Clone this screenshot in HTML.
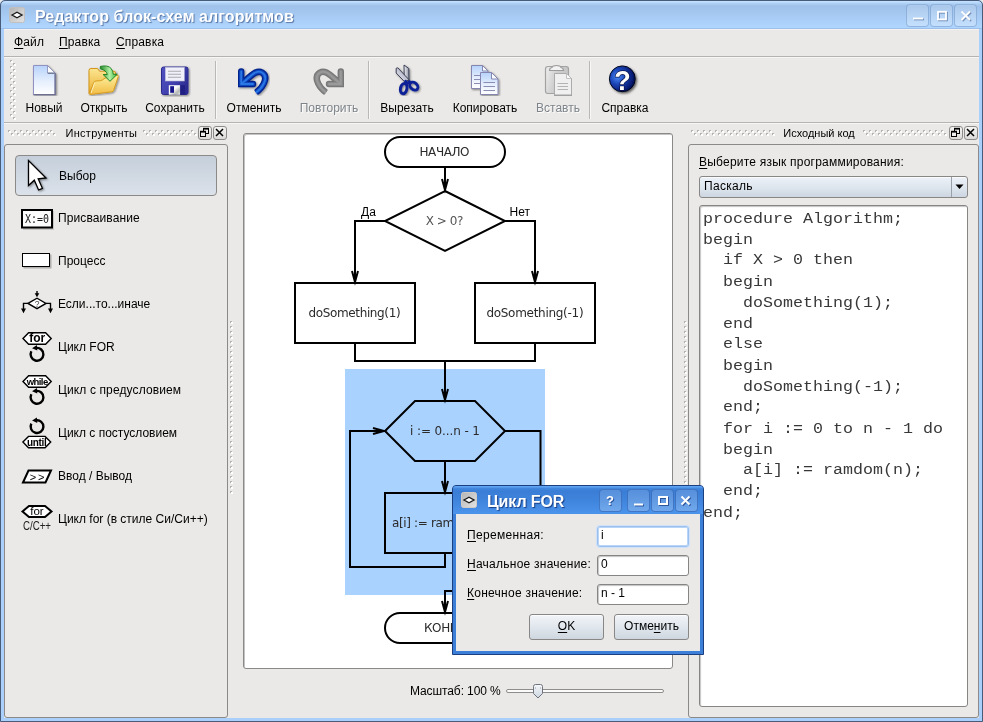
<!DOCTYPE html>
<html lang="ru">
<head>
<meta charset="utf-8">
<title>Редактор блок-схем алгоритмов</title>
<style>
html,body{margin:0;padding:0;}
body{width:983px;height:722px;overflow:hidden;position:relative;background:#eae9e7;
 font-family:"Liberation Sans",sans-serif;font-size:12px;color:#000;}
.a{position:absolute;}
.t{position:absolute;white-space:pre;line-height:14px;height:14px;}
u{text-decoration:underline;text-underline-offset:2px;text-decoration-thickness:1px;}
/* window frame */
#frame{left:0;top:0;width:983px;height:722px;box-sizing:border-box;background:#aacffa;border-radius:5px 5px 0 0;}
#frame-dark{left:0;top:0;width:983px;height:722px;box-sizing:border-box;border:1px solid #485c7a;border-radius:5px 5px 0 0;}
#titlebar{left:1px;top:1px;width:981px;height:28px;border-radius:4px 4px 0 0;
 background:linear-gradient(#c2e0ff 0,#c0deff 1px,#aed0f4 2.500px,#9fc1e9 5px,#afd5fe 26px,#afd5fe 27px,#9dc0ea 27px,#9dc0ea 28px);}
#client{left:4px;top:29px;width:975px;height:689px;background:#eae9e7;}
#title{left:35px;top:7px;font:bold 16px "Liberation Sans",sans-serif;color:#fff;line-height:20px;height:20px;
 text-shadow:1px 1px 1px rgba(60,90,140,.75);letter-spacing:0.08px;}
.wbtn{position:absolute;width:23px;height:23px;box-sizing:border-box;border:1px solid rgba(110,150,200,.55);border-radius:4px;
 background:linear-gradient(rgba(255,255,255,.12),rgba(255,255,255,.28));}
.hline{position:absolute;height:1px;}
.vsep{position:absolute;width:1px;top:61px;height:58px;background:#b9b8b6;box-shadow:1px 0 0 #f7f7f6;}
.tbl{position:absolute;top:101px;line-height:14px;height:14px;white-space:pre;text-align:center;}
.dis{color:#7e848a;text-shadow:1px 1px 0 #fdfdfd;}
.dbtn{position:absolute;width:14px;height:14px;box-sizing:border-box;border:1px solid #8d8c8a;border-radius:3px;background:linear-gradient(#f4f4f3,#dcdbd9);}
.panel{position:absolute;box-sizing:border-box;border:1px solid #8b8a88;border-radius:3px;}
.edit{position:absolute;box-sizing:border-box;border:1px solid #868584;border-radius:3px;background:#fff;box-shadow:inset 1px 1px 1px #c4c4c4;}
.btn{position:absolute;box-sizing:border-box;border:1px solid #888786;border-radius:3px;background:linear-gradient(#f2f5f9,#dfe5ec 55%,#ced6df);box-shadow:inset 0 1px 0 rgba(255,255,255,.7);}
#code{left:703px;top:209px;font:16.667px/24.706px "Liberation Mono",monospace;white-space:pre;color:#383838;transform:scaleY(0.85);transform-origin:0 0;}
.fc{font-family:"DejaVu Sans","Liberation Sans",sans-serif;font-size:12px;fill:#2a2a2a;letter-spacing:-0.35px;}
.wbtn.d{border-color:rgba(40,90,170,.6);background:linear-gradient(rgba(255,255,255,.15),rgba(255,255,255,.22));}
</style>
</head>
<body>
<div id="root" style="position:absolute;left:0;top:0;width:983px;height:722px;will-change:transform">
<!-- ===== main window frame ===== -->
<div class="a" id="frame"></div>
<div class="a" id="titlebar"></div>
<div class="a" id="client"></div>
<div class="hline" style="left:4px;top:29px;width:975px;background:#f4f3f1"></div>
<div class="a" id="frame-dark"></div>
<div class="t" id="title">Редактор блок-схем алгоритмов</div>
<svg class="a" style="left:9px;top:7px" width="16" height="16" viewBox="0 0 16 16"><defs><linearGradient id="gi" x1="0" y1="0" x2="1" y2="1"><stop offset="0" stop-color="#b4b4b4"/><stop offset="1" stop-color="#e4e4e4"/></linearGradient></defs><rect x="0.5" y="0.5" width="15" height="15" rx="2" fill="url(#gi)" stroke="#c2c0be"/><path d="M3 8 L8 5.3 L13 8 L8 10.7 Z" fill="#fff" stroke="#1a1a1a" stroke-width="1.3"/></svg>
<div class="wbtn" style="left:906px;top:4px"></div>
<div class="wbtn" style="left:930px;top:4px"></div>
<div class="wbtn" style="left:954px;top:4px"></div>
<svg class="a" style="left:906px;top:4px" width="72" height="23" viewBox="0 0 72 23">
<g stroke="rgba(60,90,140,.55)" stroke-width="1.800" fill="none" transform="translate(1,1)"><path d="M7 14.500h10"/><rect x="32" y="7.800" width="8" height="7.600"/><path d="M55.500 7.500l8.500 8.500M64 7.500l-8.500 8.500"/></g>
<g stroke="#fff" stroke-width="1.800" fill="none"><path d="M7 14.500h10"/><rect x="32" y="7.800" width="8" height="7.600"/><path d="M55.500 7.500l8.500 8.500M64 7.500l-8.500 8.500"/></g></svg>
<div class="hline" style="left:4px;top:56px;width:975px;background:#b4b3b1"></div>
<div class="hline" style="left:4px;top:57px;width:975px;background:#f6f6f5"></div>
<div class="t" style="left:14px;top:35px;letter-spacing:0.15px"><u>Ф</u>айл</div>
<div class="t" style="left:59px;top:35px;letter-spacing:0.15px"><u>П</u>равка</div>
<div class="t" style="left:116px;top:35px;letter-spacing:0.15px"><u>С</u>правка</div>
<svg class="a" width="0" height="0" style="left:0;top:0"><defs>
<linearGradient id="gpage" x1="0" y1="0" x2="0" y2="1"><stop offset="0" stop-color="#b6d2fa"/><stop offset="0.55" stop-color="#e6effd"/><stop offset="1" stop-color="#ffffff"/></linearGradient>
<linearGradient id="gfold" x1="0" y1="0" x2="0" y2="1"><stop offset="0" stop-color="#fdf0a0"/><stop offset="1" stop-color="#f2bc44"/></linearGradient>
<linearGradient id="gfoldb" x1="0" y1="0" x2="0" y2="1"><stop offset="0" stop-color="#fbe692"/><stop offset="1" stop-color="#eaae30"/></linearGradient>
<linearGradient id="ggreen" x1="0" y1="0" x2="1" y2="0"><stop offset="0" stop-color="#1f8a26"/><stop offset="0.55" stop-color="#b4f0a4"/><stop offset="1" stop-color="#36b83a"/></linearGradient>
<linearGradient id="gflop" x1="0" y1="0" x2="1" y2="0.600"><stop offset="0" stop-color="#5252c2"/><stop offset="0.6" stop-color="#4040ae"/><stop offset="1" stop-color="#2c2c92"/></linearGradient>
<linearGradient id="gundo" x1="0" y1="0" x2="0" y2="1"><stop offset="0" stop-color="#2a74e0"/><stop offset="1" stop-color="#0a3aa8"/></linearGradient>
<linearGradient id="gredo" x1="0" y1="0" x2="0" y2="1"><stop offset="0" stop-color="#a4a4a4"/><stop offset="1" stop-color="#7c7c7c"/></linearGradient>
<radialGradient id="ghelp" cx="0.32" cy="0.42" r="0.72"><stop offset="0" stop-color="#4f8cf6"/><stop offset="0.4" stop-color="#1c46b8"/><stop offset="0.8" stop-color="#071c74"/><stop offset="1" stop-color="#030a40"/></radialGradient>
<linearGradient id="gclip" x1="0" y1="0" x2="1" y2="0.300"><stop offset="0" stop-color="#efefef"/><stop offset="0.5" stop-color="#d0d0d0"/><stop offset="1" stop-color="#c4c4c4"/></linearGradient>
<linearGradient id="gblade" x1="0" y1="0" x2="1" y2="0"><stop offset="0" stop-color="#f2f2f6"/><stop offset="1" stop-color="#8e92a4"/></linearGradient>
<linearGradient id="gblade2" x1="0" y1="1" x2="1" y2="0"><stop offset="0" stop-color="#f6f6fa"/><stop offset="1" stop-color="#8e92ac"/></linearGradient>
<filter id="sh2" x="-20%" y="-20%" width="160%" height="160%"><feDropShadow dx="1.500" dy="1.500" stdDeviation="1.300" flood-color="#000" flood-opacity="0.6"/></filter>
<linearGradient id="gmetal" x1="0" y1="0" x2="1" y2="1"><stop offset="0" stop-color="#f4f4f4"/><stop offset="0.45" stop-color="#fafafa"/><stop offset="0.75" stop-color="#b4b8b4"/><stop offset="1" stop-color="#e8e8e8"/></linearGradient>
<filter id="sh" x="-20%" y="-20%" width="150%" height="150%"><feDropShadow dx="1" dy="1" stdDeviation="0.8" flood-color="#000" flood-opacity="0.45"/></filter>
<pattern id="pd" x="0" y="0" width="6" height="6" patternUnits="userSpaceOnUse"><rect x="0" y="0" width="2" height="2" fill="#b4b3b1"/><rect x="1" y="1" width="2" height="2" fill="#fff"/><rect x="3" y="3" width="2" height="2" fill="#b4b3b1"/><rect x="4" y="4" width="2" height="2" fill="#fff"/></pattern>
<pattern id="ps" x="0" y="0" width="5" height="5" patternUnits="userSpaceOnUse"><rect x="0" y="0" width="2" height="2" fill="#b4b3b1"/><rect x="1" y="1" width="2" height="2" fill="#fff"/></pattern>
</defs></svg>
<div class="hline" style="left:4px;top:122px;width:975px;background:#b4b3b1"></div>
<div class="hline" style="left:4px;top:123px;width:975px;background:#f6f6f5"></div>
<svg class="a" style="left:10px;top:60px" width="6" height="60"><rect width="6" height="60" fill="url(#pd)"/></svg>
<div class="vsep" style="left:215px"></div><div class="vsep" style="left:368px"></div><div class="vsep" style="left:589px"></div>
<!-- new -->
<svg class="a" style="left:28px;top:64px" width="32" height="32" viewBox="0 0 32 32"><g filter="url(#sh)"><path d="M5.500 1.500H19.500L27 9V30.500H5.500Z" fill="url(#gpage)" stroke="#9092c4" stroke-width="1"/><path d="M19.500 1.500V9H27Z" fill="#fbfdff" stroke="#8486b4" stroke-width="0.800" stroke-linejoin="round"/><path d="M19.800 9.300H26.500" stroke="#6c7890" stroke-width="1.200"/><path d="M27.200 9V30.700H5.500" fill="none" stroke="#6e7092" stroke-width="1.300"/></g></svg>
<!-- open -->
<svg class="a" style="left:88px;top:64px" width="32" height="32" viewBox="0 0 32 32"><g filter="url(#sh)"><path d="M1 29.500V6.300Q1 4.500 3 4.500H9.500L11.500 7.200H26Q27.500 7.200 27.500 9V14L6 19Z" fill="url(#gfoldb)" stroke="#d4961a" stroke-width="1"/><path d="M1.700 30.500L5.700 18.600Q6.200 17.200 8 17L12.500 16.700Q14.500 16.300 16 14.800Q17 14 18.500 13.700L28.800 11.200Q30.800 10.800 30.200 12.700L25.600 26.400Q25.200 27.600 23.600 27.800Z" fill="url(#gfold)" stroke="#d99c1c" stroke-width="1" stroke-linejoin="round"/><path d="M3 29L6.600 18.800" stroke="#fff8d8" stroke-width="0.900" fill="none" opacity=".9"/></g><path d="M12.300 2.400Q20 0.800 23.200 4.500Q25.200 7.300 25.300 10.300L29.300 10.200L22 17.300L15.200 10.600L19.300 10.500Q18.600 6.400 12.300 4.800Z" fill="url(#ggreen)" stroke="#15781c" stroke-width="0.900" stroke-linejoin="round"/></svg>
<!-- save -->
<svg class="a" style="left:159px;top:65px" width="32" height="32" viewBox="0 0 32 32"><g filter="url(#sh)"><path d="M2.500 4Q2.500 2 4.500 2H27Q29 2 29 4V27.500Q29 29.500 27 29.500H4.500Q2.500 29.500 2.500 27.500Z" fill="url(#gflop)" stroke="#2c2c8c" stroke-width="1"/></g><rect x="6.300" y="2.300" width="19" height="13.700" fill="#f0f0fb" stroke="#b8b8d8" stroke-width="0.600"/><path d="M9 6.200H22M9 9.200H22M9 12.200H22" stroke="#a9a9ac" stroke-width="1.100"/><rect x="21" y="20.200" width="5" height="9.300" fill="#1f1f84"/><rect x="9.800" y="20.200" width="11.300" height="9.600" fill="url(#gmetal)"/><rect x="11.200" y="21.200" width="3.800" height="6.600" fill="#16168a"/></svg>
<!-- undo -->
<svg class="a" style="left:238px;top:64px" width="32" height="32" viewBox="0 0 32 32"><g filter="url(#sh)"><path d="M3.200 20L13.500 11.200Q19.500 6 24 8.500Q29.500 12 25.800 19.500Q23.500 24.500 18 28.500" fill="none" stroke="#04228a" stroke-width="6.400" stroke-linecap="butt"/><path d="M3.200 7.500V20H15" fill="none" stroke="#04228a" stroke-width="6.400" stroke-linecap="round" stroke-linejoin="miter"/><path d="M3.200 20L13.500 11.200Q19.500 6 24 8.500Q29.500 12 25.800 19.500Q23.500 24.500 18 28.500" fill="none" stroke="#0c47c0" stroke-width="4" stroke-linecap="butt"/><path d="M3.200 7.500V20H15" fill="none" stroke="#0c47c0" stroke-width="4" stroke-linecap="round" stroke-linejoin="miter"/><path d="M3.200 20L13.500 11.200Q19.500 6 24 8.500Q29.500 12 25.800 19.500Q23.500 24.500 18 28.500" fill="none" stroke="#2f7fea" stroke-width="1.800" stroke-linecap="butt" opacity=".85"/><path d="M3.200 7.500V20H15" fill="none" stroke="#2f7fea" stroke-width="1.800" stroke-linecap="round" stroke-linejoin="miter" opacity=".85"/></g></svg>
<!-- redo -->
<svg class="a" style="left:311.5px;top:64px" width="32" height="32" viewBox="0 0 32 32"><g transform="translate(32,0) scale(-1,1)"><path d="M3.200 20L13.500 11.200Q19.500 6 24 8.500Q29.500 12 25.800 19.500Q23.500 24.500 18 28.500" fill="none" stroke="#777777" stroke-width="6.400" stroke-linecap="butt"/><path d="M3.200 7.500V20H15" fill="none" stroke="#777777" stroke-width="6.400" stroke-linecap="round" stroke-linejoin="miter"/><path d="M3.200 20L13.500 11.200Q19.500 6 24 8.500Q29.500 12 25.800 19.500Q23.500 24.500 18 28.500" fill="none" stroke="#8a8a8a" stroke-width="4" stroke-linecap="butt"/><path d="M3.200 7.500V20H15" fill="none" stroke="#8a8a8a" stroke-width="4" stroke-linecap="round" stroke-linejoin="miter"/><path d="M3.200 20L13.500 11.200Q19.500 6 24 8.500Q29.500 12 25.800 19.500Q23.500 24.500 18 28.500" fill="none" stroke="#9c9c9c" stroke-width="1.800" stroke-linecap="butt" opacity=".85"/><path d="M3.200 7.500V20H15" fill="none" stroke="#9c9c9c" stroke-width="1.800" stroke-linecap="round" stroke-linejoin="miter" opacity=".85"/></g></svg>
<!-- cut -->
<svg class="a" style="left:391px;top:64px" width="32" height="32" viewBox="0 0 32 32"><g filter="url(#sh)">
<path d="M13 1L17.800 4.500L18 16.500L13.300 14Z" fill="url(#gblade)" stroke="#2c3248" stroke-width="0.900" stroke-linejoin="round"/>
<path d="M5.200 4.300L6.800 3.800L17.800 15.500L14 18.200L5.200 9Z" fill="url(#gblade2)" stroke="#2c3248" stroke-width="0.900" stroke-linejoin="round"/>
<ellipse cx="12.700" cy="24.600" rx="3.200" ry="5.100" fill="none" stroke="#0c2096" stroke-width="3" transform="rotate(12 12.700 24.600)"/>
<ellipse cx="22.800" cy="22.100" rx="4.700" ry="3.300" fill="none" stroke="#0c2096" stroke-width="2.900" transform="rotate(42 22.800 22.100)"/>
<path d="M14.500 17L16 19.500L18.500 17.500" fill="none" stroke="#0c2096" stroke-width="2.600" stroke-linecap="round"/>
</g></svg>
<!-- copy -->
<svg class="a" style="left:469px;top:64px" width="32" height="32" viewBox="0 0 32 32"><g filter="url(#sh)"><path d="M2.500 1.500H13.500L19 7V24.500H2.500Z" fill="url(#gpage)" stroke="#8486b0" stroke-width="1"/><path d="M13.500 1.500V7H19Z" fill="#f8fbff" stroke="#8486b0" stroke-width="1" stroke-linejoin="round"/><path d="M5 11.500H11M5 15.500H11M5 19.500H11" stroke="#8a8cb6" stroke-width="1"/><path d="M11.500 8.500H22.500L29 15V30.500H11.500Z" fill="url(#gpage)" stroke="#8486b0" stroke-width="1"/><path d="M22.500 8.500V15H29Z" fill="#f8fbff" stroke="#8486b0" stroke-width="1" stroke-linejoin="round"/><path d="M14.500 18.500H26M14.500 22.500H26M14.500 26.500H26" stroke="#8a8cb6" stroke-width="1"/></g></svg>
<!-- paste -->
<svg class="a" style="left:542px;top:64px" width="32" height="32" viewBox="0 0 32 32"><path d="M3.500 5Q3.500 2.500 6 2.500H24Q26.500 2.500 26.500 5V27Q26.500 29.500 24 29.500H6Q3.500 29.500 3.500 27Z" fill="url(#gclip)" stroke="#a2a2a2" stroke-width="1.200"/><path d="M7.500 6.500Q7.500 4 10 3.500Q10.500 1.500 14.500 1.500Q18.500 1.500 19 3.500Q21.500 4 21.500 6.500Z" fill="#f2f2f2" stroke="#9c9c9c" stroke-width="1.200"/><path d="M12.500 9.500H24.500L29.500 14.500V31H12.500Z" fill="#f0f0f0" stroke="#ababab" stroke-width="1"/><path d="M24.500 9.500V14.500H29.500Z" fill="#fafafa" stroke="#b4b4b4" stroke-width="0.800"/><path d="M12 31.500H30" stroke="#a0a0a0" stroke-width="1.200"/><path d="M15.500 19.500H26M15.500 22.500H26M15.500 25.500H26" stroke="#b4b4b4" stroke-width="1"/></svg>
<!-- help -->
<svg class="a" style="left:608px;top:64px" width="34" height="34" viewBox="0 0 34 34"><g filter="url(#sh2)"><circle cx="14.300" cy="14.800" r="12.900" fill="url(#ghelp)" stroke="#03061c" stroke-width="1"/></g><text x="14.600" y="25.500" text-anchor="middle" font-family="Liberation Sans,sans-serif" font-weight="bold" font-size="27" fill="#fff" stroke="#0a1048" stroke-width="1.400" paint-order="stroke" stroke-linejoin="round">?</text></svg>
<div class="tbl" style="left:14px;width:60px">Новый</div>
<div class="tbl" style="left:74px;width:60px">Открыть</div>
<div class="tbl" style="left:140px;width:70px">Сохранить</div>
<div class="tbl" style="left:219px;width:70px">Отменить</div>
<div class="tbl dis" style="left:294px;width:70px">Повторить</div>
<div class="tbl" style="left:372px;width:70px">Вырезать</div>
<div class="tbl" style="left:445px;width:80px">Копировать</div>
<div class="tbl dis" style="left:523px;width:70px">Вставть</div>
<div class="tbl" style="left:590px;width:70px">Справка</div>


<svg class="a" style="left:8px;top:130px" width="48" height="6"><rect width="48" height="6" fill="url(#pd)"/></svg>
<svg class="a" style="left:143px;top:130px" width="54" height="6"><rect width="54" height="6" fill="url(#pd)"/></svg>
<div class="t" style="left:65.500px;top:126px;font-size:11px;letter-spacing:0.29px">Инструменты</div>
<div class="dbtn" style="left:198px;top:126px"><svg width="11" height="11" viewBox="0 0 11 11" style="position:absolute;left:0;top:0"><rect x="4.500" y="2" width="5" height="4.500" fill="none" stroke="#000" stroke-width="1"/><path d="M4 1.500H10" stroke="#000" stroke-width="1.400"/><rect x="1.500" y="5" width="5" height="4.500" fill="#eee" stroke="#000" stroke-width="1"/><path d="M1 4.500H7" stroke="#000" stroke-width="1.400"/></svg></div>
<div class="dbtn" style="left:213px;top:126px"><svg width="11" height="11" viewBox="0 0 11 11" style="position:absolute;left:0;top:0"><path d="M2 2L9 9M9 2L2 9" stroke="#000" stroke-width="1.500"/></svg></div>
<div class="panel" style="left:4px;top:144px;width:224px;height:574px;border-left-color:#8b8a88"></div>
<div class="a" style="left:15px;top:155px;width:202px;height:41px;box-sizing:border-box;border:1px solid #8c8a88;border-radius:4px;background:linear-gradient(#c5cfdb,#d0d8e2 50%,#dbe2ea)"></div>
<div class="t" style="left:59px;top:169px">Выбор</div>
<div class="t" style="left:58px;top:211px;letter-spacing:0.1px">Присваивание</div>
<div class="t" style="left:58px;top:254px">Процесс</div>
<div class="t" style="left:58px;top:297px">Если...то...иначе</div>
<div class="t" style="left:58px;top:340px">Цикл FOR</div>
<div class="t" style="left:58px;top:383px;letter-spacing:0.12px">Цикл с предусловием</div>
<div class="t" style="left:58px;top:426px">Цикл с постусловием</div>
<div class="t" style="left:58px;top:469px">Ввод / Вывод</div>
<div class="t" style="left:58px;top:512px">Цикл for (в стиле Си/Си++)</div>
<svg class="a" style="left:0;top:150px" width="70" height="400" viewBox="0 150 70 400">
<!-- cursor -->
<g filter="url(#sh)"><path d="M28.500 160.500V185.500L34.300 180.200L38.600 190L42.400 188.300L38.200 178.800L46 178Z" fill="#fff" stroke="#000" stroke-width="1.300" stroke-linejoin="miter"/></g>
<!-- assign -->
<rect x="23" y="211" width="31" height="19" fill="#8a8a8a" opacity=".35"/>
<rect x="22" y="210" width="30" height="17.500" fill="#fcfcfc" stroke="#000" stroke-width="2"/>
<text x="25" y="222.800" textLength="24" lengthAdjust="spacingAndGlyphs" font-family="DejaVu Sans Mono,Liberation Mono,monospace" font-size="12" fill="#1a1a1a">X:=0</text>
<!-- process -->
<rect x="23.500" y="254.500" width="28" height="14" fill="#8a8a8a" opacity=".6"/>
<rect x="22.500" y="253.500" width="27" height="13" fill="#fff" stroke="#000" stroke-width="1"/>
<!-- if -->
<path d="M37 291V295" stroke="#000" stroke-width="1.400"/><path d="M34.700 293.300H39.300L37 297.300Z" fill="#000"/>
<path d="M28 303.400L37 298.200L46 303.400L37 308.600Z" fill="#fff" stroke="#000" stroke-width="1.400"/>
<path d="M28 303.400H23.500V309M46 303.400H50.500V309" fill="none" stroke="#000" stroke-width="1.400"/>
<path d="M21 308.500H26L23.500 313.200ZM48 308.500H53L50.500 313.200Z" fill="#000"/>
<text x="37" y="307" text-anchor="middle" font-family="Liberation Sans,sans-serif" font-size="8.500" fill="#444">?</text>
<!-- for -->
<path d="M23.00 338.50L28.60 332.80H45.60L51.20 338.50L45.60 344.20H28.60Z" fill="#fff" stroke="#000" stroke-width="1.4" stroke-linejoin="miter"/>
<text x="37.200" y="341.900" text-anchor="middle" font-family="Liberation Sans,sans-serif" font-weight="bold" font-size="12" fill="#000">for</text>
<path d="M35.89 348.00A6.4 6.4 0 1 1 31.35 351.30" fill="none" stroke="#000" stroke-width="2.4"/><path d="M36.89 345.10L32.09 348.30L37.29 350.60Z" fill="#000"/>
<!-- while -->
<path d="M23.00 381.50L28.60 375.80H45.60L51.20 381.50L45.60 387.20H28.60Z" fill="#fff" stroke="#000" stroke-width="1.4" stroke-linejoin="miter"/>
<text x="37.200" y="384.700" text-anchor="middle" font-family="Liberation Sans,sans-serif" font-weight="bold" font-size="9.500" letter-spacing="-0.600" fill="#000">while</text>
<path d="M35.89 391.00A6.4 6.4 0 1 1 31.35 394.30" fill="none" stroke="#000" stroke-width="2.4"/><path d="M36.89 388.10L32.09 391.30L37.29 393.60Z" fill="#000"/>
<!-- until -->
<path d="M35.89 420.30A6.4 6.4 0 1 1 31.35 423.60" fill="none" stroke="#000" stroke-width="2.4"/><path d="M36.89 417.40L32.09 420.60L37.29 422.90Z" fill="#000"/>
<path d="M22.90 442.10L28.50 436.40H45.10L50.70 442.10L45.10 447.80H28.50Z" fill="#fff" stroke="#000" stroke-width="1.4" stroke-linejoin="miter"/>
<text x="36.700" y="445.600" text-anchor="middle" font-family="Liberation Sans,sans-serif" font-weight="bold" font-size="10" letter-spacing="-0.300" fill="#000">until</text>
<!-- io -->
<path d="M23 482.500L28.500 470.500H51L45.500 482.500Z" fill="#fff" stroke="#000" stroke-width="2"/>
<text x="38" y="480.800" text-anchor="middle" font-family="Liberation Sans,sans-serif" font-size="11" letter-spacing="1.800" fill="#000">&gt;&gt;</text>
<!-- for c -->
<path d="M22.50 511.40L29.00 505.90H45.00L51.50 511.40L45.00 516.90H29.00Z" fill="#fff" stroke="#000" stroke-width="2" stroke-linejoin="miter"/>
<text x="37" y="515" text-anchor="middle" font-family="Liberation Sans,sans-serif" font-size="11.500" fill="#000">for</text>
<text x="37" y="530" text-anchor="middle" font-family="Liberation Sans,sans-serif" font-size="13.500" fill="#222" transform="translate(37 0) scale(0.72 1) translate(-37 0)">C/C++</text>
</svg>


<div class="a" style="left:243px;top:133px;width:430px;height:536px;box-sizing:border-box;border:1px solid #8a8988;border-radius:3px;background:#fff;box-shadow:inset 1px 1px 0 #c4c4c4"></div>
<svg class="a" style="left:244px;top:134px" width="428" height="534" viewBox="244 134 428 534">
<rect x="345" y="369" width="200" height="226" fill="#aad2ff"/>
<g fill="none" stroke="#000" stroke-width="2">
<rect x="385" y="137" width="120" height="30" rx="15" ry="15" fill="#fff"/>
<path d="M445 167V190"/>
<path d="M445 191L505 221L445 251L385 221Z" fill="#fff"/>
<path d="M385 221H355V281M505 221H535V281"/>
<rect x="295" y="283" width="120" height="60" fill="#fff"/>
<rect x="475" y="283" width="120" height="60" fill="#fff"/>
<path d="M355 343V361H535V343M445 361V400"/>
<path d="M385 431L415 401H475L505 431L475 461H415Z"/>
<path d="M445 461V491"/>
<rect x="385" y="493" width="120" height="60"/>
<path d="M445 553V567H350V431H384"/>
<path d="M505 431H540.500V591H445V612"/>
<rect x="385" y="613" width="120" height="30" rx="15" ry="15" fill="#fff"/>
</g>
<path d="M442 179L445 190L448 179" fill="none" stroke="#000" stroke-width="2" stroke-linejoin="miter"/><path d="M352 271L355 282L358 271" fill="none" stroke="#000" stroke-width="2" stroke-linejoin="miter"/><path d="M532 271L535 282L538 271" fill="none" stroke="#000" stroke-width="2" stroke-linejoin="miter"/><path d="M442 389L445 400L448 389" fill="none" stroke="#000" stroke-width="2" stroke-linejoin="miter"/><path d="M442 481L445 492L448 481" fill="none" stroke="#000" stroke-width="2" stroke-linejoin="miter"/><path d="M442 601L445 612L448 601" fill="none" stroke="#000" stroke-width="2" stroke-linejoin="miter"/><path d="M373 428L384 431L373 434" fill="none" stroke="#000" stroke-width="2" stroke-linejoin="miter"/>
<g class="fc" text-anchor="middle">
<text x="444.500" y="156" textLength="50" style="letter-spacing:0">НАЧАЛО</text>
<text x="444.500" y="225" textLength="37.500" style="fill:#555;letter-spacing:0">X &gt; 0?</text>
<text x="354.600" y="316.800" textLength="92" style="letter-spacing:0">doSomething(1)</text>
<text x="535" y="316.800" textLength="97.200" style="letter-spacing:0">doSomething(-1)</text>
<text x="445" y="434.800" textLength="70" style="letter-spacing:0">i := 0...n - 1</text>
<text x="392" y="527" text-anchor="start">a[i] := ramdom(n)</text>
<text x="445" y="632">КОНЕЦ</text>
</g>
<text x="361" y="216" font-family="Liberation Sans,sans-serif" font-size="12" fill="#000">Да</text>
<text x="509.500" y="216" font-family="Liberation Sans,sans-serif" font-size="12" fill="#000">Нет</text>
</svg>
<div class="t" style="left:410px;top:684px;letter-spacing:-0.1px">Масштаб: 100 %</div>
<div class="a" style="left:506px;top:689px;width:158px;height:4px;box-sizing:border-box;border:1px solid #8e8d8b;border-radius:2px;background:#fbfbfb"></div>
<svg class="a" style="left:532px;top:683px" width="14" height="18" viewBox="0 0 14 18"><defs><linearGradient id="gsl" x1="0" y1="0" x2="0" y2="1"><stop offset="0" stop-color="#f6f8fb"/><stop offset="1" stop-color="#cdd6e0"/></linearGradient></defs><path d="M1.500 3.500Q1.500 1.500 3.500 1.500H8.500Q10.500 1.500 10.500 3.500V10.500L6 15L1.500 10.500Z" fill="url(#gsl)" stroke="#6f747c" stroke-width="1"/><path d="M3.500 4.500v1M8.500 4.500v1" stroke="#9aa0a8" stroke-width="1"/></svg>
<!-- splitter handles -->
<svg class="a" style="left:230px;top:321px" width="3" height="173"><rect width="3" height="173" fill="url(#ps)"/></svg>
<svg class="a" style="left:684px;top:321px" width="3" height="173"><rect width="3" height="173" fill="url(#ps)"/></svg>


<svg class="a" style="left:691px;top:130px" width="84" height="6"><rect width="84" height="6" fill="url(#pd)"/></svg>
<svg class="a" style="left:863px;top:130px" width="84" height="6"><rect width="84" height="6" fill="url(#pd)"/></svg>
<div class="t" style="left:783.300px;top:126px;font-size:11px">Исходный код</div>
<div class="dbtn" style="left:949px;top:126px"><svg width="11" height="11" viewBox="0 0 11 11" style="position:absolute;left:0;top:0"><rect x="4.500" y="2" width="5" height="4.500" fill="none" stroke="#000" stroke-width="1"/><path d="M4 1.500H10" stroke="#000" stroke-width="1.400"/><rect x="1.500" y="5" width="5" height="4.500" fill="#eee" stroke="#000" stroke-width="1"/><path d="M1 4.500H7" stroke="#000" stroke-width="1.400"/></svg></div>
<div class="dbtn" style="left:964px;top:126px"><svg width="11" height="11" viewBox="0 0 11 11" style="position:absolute;left:0;top:0"><path d="M2 2L9 9M9 2L2 9" stroke="#000" stroke-width="1.500"/></svg></div>
<div class="panel" style="left:688px;top:144px;width:291px;height:574px"></div>
<div class="t" style="left:699px;top:155px;letter-spacing:0.22px"><u>В</u>ыберите язык программирования:</div>
<div class="btn" style="left:699px;top:176px;width:269px;height:22px;background:linear-gradient(#edf2f8,#dbe3ec 60%,#cdd7e1)"></div>
<div class="a" style="left:951px;top:177px;width:1px;height:20px;background:#9aa0a8"></div>
<svg class="a" style="left:955px;top:184px" width="9" height="6" viewBox="0 0 9 6"><path d="M0.500 0.500H8.500L4.500 5Z" fill="#000"/></svg>
<div class="t" style="left:704px;top:179px;letter-spacing:0.3px">Паскаль</div>
<div class="edit" style="left:699px;top:205px;width:269px;height:502px"></div>
<div class="a" id="code">procedure Algorithm;
begin
  if X &gt; 0 then
  begin
    doSomething(1);
  end
  else
  begin
    doSomething(-1);
  end;
  for i := 0 to n - 1 do
  begin
    a[i] := ramdom(n);
  end;
end;</div>


<div class="a" style="left:452px;top:485px;width:252px;height:170px;box-sizing:border-box;border:1px solid #1c3f80;border-radius:4px 4px 0 0;background:#3b7fd9"></div>
<div class="a" style="left:453px;top:486px;width:250px;height:28px;border-radius:3px 3px 0 0;background:linear-gradient(#62a6f4 0,#5a9eef 1px,#4187de 2.500px,#3a7dd6 5px,#3f84dc 14px,#4b92ea 27px)"></div>
<div class="a" style="left:456px;top:514px;width:244px;height:137px;background:#eae9e7"></div>
<svg class="a" style="left:461px;top:492px" width="16" height="16" viewBox="0 0 16 16"><rect x="0.500" y="0.500" width="15" height="15" rx="2" fill="url(#gi)" stroke="#d2cbc4"/><path d="M3 8 L8 5.300 L13 8 L8 10.700 Z" fill="#fff" stroke="#1a1a1a" stroke-width="1.300"/></svg>
<div class="t" style="left:487px;top:492px;font:bold 16px 'Liberation Sans',sans-serif;color:#fff;line-height:20px;height:20px;text-shadow:1px 1px 1px rgba(10,40,110,.8);letter-spacing:-0.1px">Цикл FOR</div>
<div class="wbtn d" style="left:599px;top:489px"></div>
<div class="wbtn d" style="left:627px;top:489px"></div>
<div class="wbtn d" style="left:651px;top:489px"></div>
<div class="wbtn d" style="left:675px;top:489px"></div>
<svg class="a" style="left:600px;top:489px" width="98" height="22" viewBox="0 0 98 22">
<g stroke="rgba(10,40,110,.6)" stroke-width="2" fill="none" transform="translate(1,1)"><path d="M34 15.500h9"/><rect x="59" y="8" width="8" height="7"/><path d="M81.500 7.500l8 8M89.500 7.500l-8 8"/></g>
<g stroke="#fff" stroke-width="2" fill="none"><path d="M34 15.500h9"/><rect x="59" y="8" width="8" height="7"/><path d="M81.500 7.500l8 8M89.500 7.500l-8 8"/></g>
<text x="11" y="17" text-anchor="middle" font-family="Liberation Sans,sans-serif" font-weight="bold" font-size="13" fill="rgba(10,40,110,.6)">?</text>
<text x="10" y="16" text-anchor="middle" font-family="Liberation Sans,sans-serif" font-weight="bold" font-size="13" fill="#fff">?</text></svg>
<div class="t" style="left:467px;top:528px;letter-spacing:0.33px"><u>П</u>еременная:</div>
<div class="t" style="left:467px;top:557px;letter-spacing:0.25px"><u>Н</u>ачальное значение:</div>
<div class="t" style="left:467px;top:586px;letter-spacing:0.25px"><u>К</u>онечное значение:</div>
<div class="edit" style="left:597px;top:526px;width:92px;height:21px;border-color:#9cc0ee;box-shadow:0 0 0 1px #cfe2fa,inset 0 0 0 1px #b8d4f6"></div>
<div class="edit" style="left:597px;top:555px;width:92px;height:21px"></div>
<div class="edit" style="left:597px;top:584px;width:92px;height:21px"></div>
<div class="t" style="left:601px;top:528px">i</div>
<div class="t" style="left:601px;top:557px">0</div>
<div class="t" style="left:601px;top:586px">n - 1</div>
<div class="btn" style="left:529px;top:614px;width:75px;height:26px"></div>
<div class="btn" style="left:614px;top:614px;width:75px;height:26px"></div>
<div class="t" style="left:529px;top:619px;width:75px;text-align:center"><u>O</u>K</div>
<div class="t" style="left:614px;top:619px;width:75px;text-align:center">Отме<u>н</u>ить</div>

</div>
</body>
</html>
